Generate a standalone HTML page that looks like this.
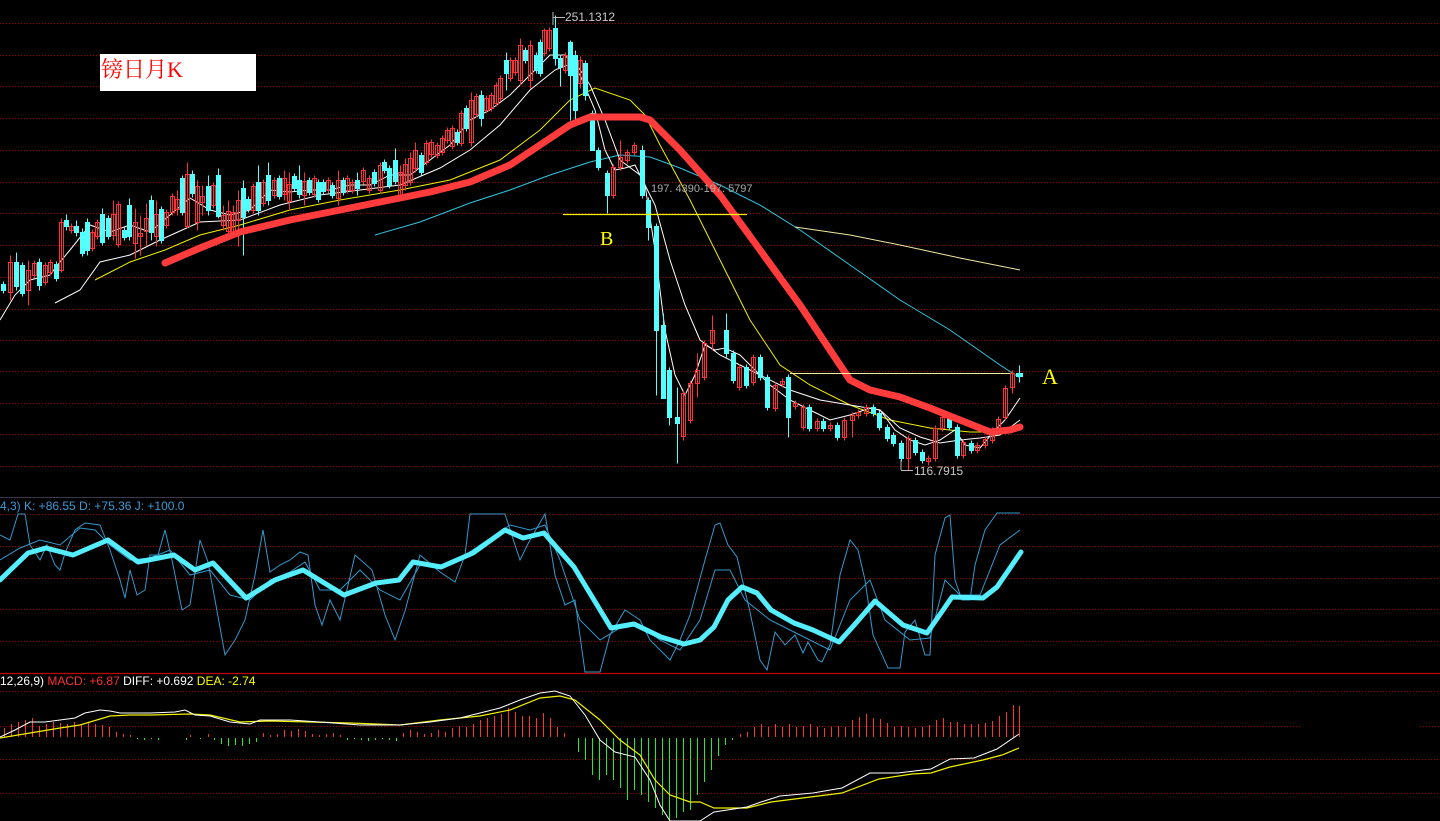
<!DOCTYPE html>
<html><head><meta charset="utf-8"><style>
html,body{margin:0;padding:0;background:#000;width:1440px;height:821px;overflow:hidden}
svg{display:block}
text{font-family:"Liberation Sans",sans-serif}
</style></head><body>
<svg width="1440" height="821" viewBox="0 0 1440 821" xmlns="http://www.w3.org/2000/svg">
<rect width="1440" height="821" fill="#000"/>
<g stroke="#a00000" stroke-width="1" stroke-dasharray="1,2" fill="none">
<path d="M0 23.5H1440M0 55.5H1440M0 86.5H1440M0 118.5H1440M0 150.5H1440M0 182.5H1440M0 213.5H1440M0 245.5H1440M0 277.5H1440M0 309.5H1440M0 340.5H1440M0 371.5H1440M0 403.5H1440M0 434.5H1440M0 466.5H1440"/>
<path d="M0 514.5H1440M0 546.5H1440M0 578.5H1440M0 609.5H1440M0 641.5H1440"/>
<path d="M0 691.5H1440M0 726.5H1300M1420 726.5H1440M0 759.5H1440M0 793.5H1440"/>
</g>
<path d="M0 497.5H1440" stroke="#3a3a4a" stroke-width="1"/>
<path d="M0 673.5H1440" stroke="#c00000" stroke-width="1.3"/>

<rect x="100" y="54" width="156" height="37" fill="#fff"/>
<text x="101" y="77" font-size="22" fill="#ff0000" style="font-family:'Liberation Serif','Noto Serif CJK SC',serif">镑日月K</text>

<polyline fill="none" stroke="#2fc6e0" stroke-width="1" points="375,235 420,222 470,203 510,190 550,175 590,162 620,155 650,157 680,168 720,185 760,205 800,230 850,265 900,300 950,330 1000,365 1020,378"/>
<polyline fill="none" stroke="#f0e8a0" stroke-width="1" points="795,227 850,235 900,245 960,258 1020,270"/>
<polyline fill="none" stroke="#f0f000" stroke-width="1" points="95,280 130,262 165,250 200,235 240,225 290,210 340,200 400,190 450,180 500,160 540,130 570,100 595,88 630,100 645,115 660,145 690,200 720,260 750,320 780,365 810,385 850,405 890,420 930,428 970,432 1000,432 1020,428"/>
<polyline fill="none" stroke="#ffffff" stroke-width="1" points="55,303 80,290 100,262 130,255 160,240 200,222 240,220 280,205 320,195 360,190 400,185 440,168 470,150 500,125 530,90 555,70 575,62 590,85 605,120 620,160 640,175 655,205 670,260 685,305 700,340 720,355 740,365 760,375 790,390 820,400 850,405 880,410 900,428 920,437 940,443 960,440 980,438 1000,435 1020,420"/>
<polyline fill="none" stroke="#ffffff" stroke-width="1" points="0,320 15,295 30,280 50,275 60,262 70,250 90,225 110,232 130,225 150,232 170,215 190,198 210,210 230,215 250,210 270,190 290,192 310,190 330,190 350,185 370,185 390,175 410,175 430,160 450,145 470,120 490,110 510,95 530,75 550,55 565,55 580,75 595,110 605,150 615,170 625,168 635,165 645,185 655,250 665,330 675,375 685,395 695,375 705,345 715,350 725,348 740,355 755,370 770,385 790,400 810,410 830,420 850,415 870,408 880,410 895,430 910,440 925,445 940,440 955,430 965,445 980,448 995,430 1005,420 1020,398"/>

<g transform="translate(0.5,0.5)" shape-rendering="crispEdges">
<path fill="none" stroke="#ff3232" stroke-width="1" d="
M10 255V300M8 262h4v30h-4z M28 260V305M26 270h4v20h-4z M34 260V278M32 263h4v12h-4z M45 262V285M43 265h4v17h-4z M50 259V275M48 262h4v10h-4z M61 218V272M59 222h4v48h-4z M71 223V233M69 226h4v4h-4z M92 229V251M90 232h4v16h-4z M97 219V239M95 222h4v14h-4z M113 200V240M111 214h4v21h-4z M118 201V247M116 204h4v40h-4z M135 208V258M133 222h4v21h-4z M140 215V255M138 233h4v3h-4z M146 203V245M144 218h4v13h-4z M156 200V246M154 214h4v22h-4z M166 209V228M164 212h4v13h-4z M172 193V215M170 196h4v16h-4z M177 190V215M175 199h4v10h-4z M187 162V228M185 174h4v52h-4z M197 180V230M195 186h4v36h-4z M202 185V215M200 196h4v6h-4z M213 182V208M211 185h4v20h-4z M223 205V230M221 215h4v10h-4z M228 200V236M226 211h4v20h-4z M233 205V237M231 212h4v21h-4z M238 190V246M236 200h4v20h-4z M253 183V213M251 186h4v24h-4z M263 179V206M261 182h4v21h-4z M274 177V198M272 180h4v15h-4z M284 170V200M282 178h4v16h-4z M289 172V210M287 184h4v17h-4z M304 172V205M302 181h4v14h-4z M314 175V197M312 178h4v16h-4z M328 177V193M326 180h4v10h-4z M338 170V205M336 180h4v18h-4z M347 175V193M345 178h4v12h-4z M352 179V193M350 182h4v8h-4z M363 167V184M361 170h4v11h-4z M369 175V193M367 178h4v12h-4z M380 162V193M378 165h4v25h-4z M400 165V200M398 172h4v24h-4z M405 158V190M403 164h4v21h-4z M410 152V185M408 158h4v24h-4z M415 142V172M413 150h4v18h-4z M426 140V165M424 143h4v19h-4z M431 139V157M429 142h4v12h-4z M437 142V158M435 145h4v10h-4z M442 135V155M440 138h4v14h-4z M447 127V143M445 130h4v10h-4z M452 125V149M450 128h4v18h-4z M461 110V146M459 113h4v30h-4z M471 92V146M469 100h4v42h-4z M476 93V117M474 96h4v18h-4z M486 95V113M484 98h4v12h-4z M491 92V111M489 95h4v13h-4z M496 82V106M494 85h4v18h-4z M500 75V101M498 78h4v20h-4z M510 57V81M508 60h4v18h-4z M515 57V75M513 60h4v12h-4z M520 38V85M518 45h4v35h-4z M530 40V88M528 45h4v35h-4z M544 28V56M542 30h4v23h-4z M549 27V51M547 30h4v18h-4z M565 52V73M563 55h4v15h-4z M580 56V88M578 60h4v23h-4z
M613 164V198M611 167h4v28h-4z M620 140V170M618 157h4v10h-4z M627 149V163M625 152h4v8h-4z M634 142V155M632 145h4v7h-4z M683 390V440M681 393h4v43h-4z M690 380V423M688 383h4v37h-4z M697 353V397M695 370h4v13h-4z M704 340V380M702 343h4v34h-4z M712 315V350M710 330h4v13h-4z M739 364V390M737 367h4v20h-4z M753 354V385M751 357h4v25h-4z M775 382V411M773 385h4v23h-4z M782 378V387M780 381h4v3h-4z M795 400V409M793 403h4v3h-4z M803 404V430M801 407h4v20h-4z M817 418V431M815 421h4v7h-4z M830 422V431M828 425h4v3h-4z M844 417V440M842 420h4v17h-4z M852 412V437M850 415h4v5h-4z M858 409V418M856 412h4v3h-4z M866 404V416M864 407h4v6h-4z M908 435V470M906 438h4v20h-4z M928 455V465M926 458h4v3h-4z M935 425V461M933 428h4v30h-4z M942 414V431M940 417h4v11h-4z M963 439V458M961 442h4v13h-4z M977 442V453M975 445h4v5h-4z M985 436V448M983 439h4v6h-4z M992 427V443M990 430h4v10h-4z M998 416V433M996 419h4v11h-4z M1005 385V420M1003 388h4v29h-4z M1012 370V393M1010 373h4v14h-4z"/>
<path fill="#54ffff" stroke="#54ffff" stroke-width="1" d="
M3 281V293M1 284h4v6h-4z M16 252V290M14 262h4v24h-4z M22 262V296M20 265h4v28h-4z M39 258V290M37 262h4v23h-4z M56 261V281M54 264h4v14h-4z M66 214V230M64 220h4v6h-4z M76 220V236M74 226h4v6h-4z M82 228V256M80 232h4v21h-4z M87 218V255M85 222h4v28h-4z M102 208V245M100 214h4v28h-4z M108 215V239M106 218h4v18h-4z M124 227V240M122 230h4v7h-4z M129 198V240M127 205h4v31h-4z M151 195V240M149 200h4v32h-4z M161 206V243M159 209h4v31h-4z M182 175V215M180 178h4v34h-4z M192 170V197M190 174h4v19h-4z M208 175V215M206 186h4v24h-4z M218 168V218M216 175h4v41h-4z M243 180V255M241 188h4v29h-4z M248 196V212M246 199h4v10h-4z M258 165V215M256 182h4v28h-4z M268 162V205M266 175h4v25h-4z M279 175V199M277 178h4v18h-4z M294 173V191M292 176h4v12h-4z M299 165V198M297 180h4v14h-4z M309 177V195M307 180h4v12h-4z M318 179V202M316 182h4v17h-4z M323 179V194M321 182h4v9h-4z M332 182V198M330 185h4v10h-4z M343 177V195M341 180h4v12h-4z M357 172V195M355 180h4v8h-4z M374 169V186M372 172h4v11h-4z M384 159V173M382 162h4v8h-4z M389 165V188M387 168h4v17h-4z M395 148V184M393 160h4v21h-4z M421 152V175M419 155h4v17h-4z M457 129V145M455 132h4v10h-4z M466 105V131M464 108h4v20h-4z M481 90V126M479 95h4v23h-4z M506 52V90M504 60h4v13h-4z M525 47V63M523 50h4v10h-4z M536 52V73M534 55h4v15h-4z M540 39V76M538 42h4v31h-4z M555 15V65M553 28h4v30h-4z M560 54V86M558 58h4v9h-4z M570 40V120M568 42h4v33h-4z M575 50V120M573 55h4v55h-4z M585 60V100M583 63h4v32h-4z M592 110V150M590 113h4v37h-4z
M598 147V170M596 150h4v17h-4z M607 170V213M605 173h4v22h-4z M642 145V198M640 150h4v45h-4z M648 197V240M646 200h4v27h-4z M656 223V395M654 226h4v104h-4z M663 313V398M661 325h4v73h-4z M669 367V425M667 370h4v47h-4z M677 387V463M675 417h4v6h-4z M726 313V357M724 330h4v23h-4z M733 350V383M731 353h4v27h-4z M746 364V388M744 367h4v18h-4z M760 354V380M758 357h4v20h-4z M767 374V410M765 377h4v30h-4z M788 374V437M786 377h4v40h-4z M809 404V431M807 407h4v21h-4z M823 418V431M821 421h4v7h-4z M837 422V440M835 425h4v12h-4z M873 404V416M871 407h4v6h-4z M879 410V430M877 413h4v14h-4z M887 424V441M885 427h4v11h-4z M893 432V446M891 435h4v8h-4z M901 440V461M899 443h4v15h-4z M915 437V455M913 440h4v12h-4z M922 449V463M920 452h4v8h-4z M949 414V430M947 417h4v10h-4z M957 424V458M955 427h4v28h-4z M971 440V453M969 443h4v7h-4z M1019 365V382M1016 373h6v3h-6z"/>
</g>

<polyline fill="none" stroke="#ff3b3b" stroke-width="7" stroke-linecap="round" stroke-linejoin="round" points="165,263 200,248 240,232 290,220 340,210 390,200 430,192 470,182 510,165 540,145 570,125 590,117 640,117 650,120 680,150 720,195 760,250 800,305 830,350 850,380 870,390 900,397 930,408 960,420 990,432 1010,430 1020,427"/>

<path d="M563 214.5H747" stroke="#f0f000" stroke-width="1.3"/>
<text x="600" y="245" font-size="20" fill="#ffff00" style="font-family:'Liberation Serif',serif">B</text>
<path d="M790 373.5H1010" stroke="#f0f0a0" stroke-width="1"/>
<text x="1042" y="384" font-size="22" fill="#ffff00" style="font-family:'Liberation Serif',serif">A</text>
<text x="651" y="192" font-size="11" fill="#aaaaaa">197. 4390-197. 5797</text>
<path d="M553 12V25M553 17.5H565" stroke="#bbbbbb" stroke-width="1"/>
<text x="565" y="21" font-size="12" fill="#c8c8c8">251.1312</text>
<path d="M901 460V470M901 470.5H913" stroke="#bbbbbb" stroke-width="1"/>
<text x="914" y="475" font-size="12" fill="#c8c8c8">116.7915</text>

<text x="0" y="510" font-size="12" fill="#3b9ad6">4,3) K: +86.55 D: +75.36 J: +100.0</text>
<polyline fill="none" stroke="#3399cc" stroke-width="1" points="0,535 10,540 18,514 25,514 30,545 40,560 47,545 55,565 60,570 65,553 75,530 85,523 100,525 110,550 120,580 125,598 130,570 137,595 145,590 150,555 158,555 165,530 172,560 182,610 190,605 200,540 208,562 215,600 225,655 235,640 245,620 255,575 263,530 270,572 280,565 290,560 300,552 308,555 315,605 322,625 330,600 340,620 355,555 372,570 385,615 395,640 405,611 420,555 440,572 455,582 465,555 470,514 505,514 515,545 520,560 530,540 545,514 555,575 565,605 575,600 585,672 600,672 610,635 625,610 640,620 650,640 660,650 670,660 680,640 690,615 705,560 715,525 720,523 728,545 737,557 750,612 760,660 767,670 775,632 785,645 795,635 803,653 808,642 818,660 822,662 830,645 840,575 850,540 858,550 865,580 873,635 888,668 900,668 905,632 915,620 925,655 930,655 935,555 945,518 950,515 955,580 962,600 970,600 975,565 985,530 997,513 1020,513"/>
<polyline fill="none" stroke="#3399cc" stroke-width="1" points="0,560 20,548 40,540 60,545 80,528 95,530 110,545 130,560 150,558 170,550 190,575 210,570 230,595 250,600 270,580 290,572 305,562 320,590 340,590 360,570 380,590 400,600 420,565 450,565 480,545 510,525 530,530 545,525 560,560 580,620 600,640 620,628 640,625 660,640 680,650 700,620 715,570 730,570 745,600 770,620 800,635 830,650 850,600 870,580 885,620 910,640 930,638 945,580 960,595 980,595 1000,545 1020,530"/>
<polyline fill="none" stroke="#55eeff" stroke-width="5" stroke-linecap="round" stroke-linejoin="round" points="0,580 28,553 46,548 73,555 108,540 138,562 174,555 195,570 213,563 246,598 275,580 303,570 344,595 376,583 399,580 413,562 441,567 473,553 505,530 523,538 544,533 574,567 611,628 634,624 661,637 684,644 700,640 714,627 728,600 742,587 757,593 771,610 794,623 813,630 839,642 856,623 875,601 889,613 903,625 927,633 941,613 952,597 983,598 997,587 1021,552"/>

<text x="0" y="685" font-size="12"><tspan fill="#ffffff">12,26,9)</tspan><tspan fill="#ff3232"> MACD: +6.87</tspan><tspan fill="#ffffff"> DIFF: +0.692</tspan><tspan fill="#ffff00"> DEA: -2.74</tspan></text>
<g transform="translate(0.5,0)" shape-rendering="crispEdges">
<path stroke="#ff3232" stroke-width="1" d="M4 737V728M11 737V724M18 737V722M25 737V720M32 737V718M39 737V726M46 737V724M53 737V722M60 737V723M67 737V724M74 737V722M81 737V724M88 737V722M95 737V724M102 737V725M109 737V727M116 737V732M123 737V734M130 737V735M190 737V735M208 737V734M263 737V733M270 737V735M277 737V734M284 737V730M291 737V731M298 737V729M305 737V731M312 737V734M319 737V735M326 737V734M333 737V733M340 737V735M403 737V733M410 737V730M417 737V732M424 737V734M431 737V733M438 737V730M445 737V732M452 737V728M459 737V726M466 737V727M473 737V724M480 737V720M487 737V718M494 737V716M501 737V714M508 737V708M515 737V712M522 737V716M529 737V716M536 737V718M543 737V713M550 737V718M557 737V727M564 737V733
M740 737V734M747 737V732M754 737V727M761 737V724M768 737V727M775 737V724M782 737V727M789 737V724M796 737V727M803 737V726M810 737V724M817 737V727M824 737V728M831 737V727M838 737V726M845 737V727M852 737V720M859 737V717M866 737V714M873 737V718M880 737V719M887 737V723M894 737V727M901 737V726M908 737V727M915 737V728M922 737V727M929 737V725M936 737V720M943 737V718M950 737V722M957 737V722M964 737V724M971 737V724M978 737V724M985 737V723M992 737V721M999 737V716M1006 737V712M1013 737V705M1019 737V706"/>
<path stroke="#22ee22" stroke-width="1" d="M137 738V739M144 738V740M151 738V739M158 738V740M186 738V740M200 738V739M214 738V740M221 738V744M228 738V746M235 738V745M242 738V746M249 738V744M256 738V742M347 738V740M354 738V739M361 738V740M368 738V741M375 738V740M382 738V739M389 738V740M396 738V741M578 738V752M585 738V760M592 738V775M599 738V780M606 738V775M613 738V780M620 738V788M627 738V800M634 738V790M641 738V795M648 738V802M655 738V808M662 738V815M669 738V820M676 738V818M683 738V812M690 738V810M697 738V795M704 738V782M711 738V770M718 738V756M725 738V745M732 738V740"/>
</g>
<polyline fill="none" stroke="#f0f000" stroke-width="1.2" points="0,738 30,733 60,728 80,725 110,716 130,715 150,715 190,714 210,715 240,722 270,721 310,722 350,723 400,725 440,720 480,716 510,710 540,698 560,696 575,700 600,720 620,740 640,755 655,780 670,795 690,802 700,802 714,808 747,808 771,802 842,793 879,779 912,774 931,773 950,767 983,760 1002,755 1019,748"/>
<polyline fill="none" stroke="#ffffff" stroke-width="1" points="0,737 15,730 30,722 45,722 60,720 75,718 85,713 100,710 110,711 120,713 150,713 175,712 185,710 195,715 210,716 230,722 250,724 260,720 290,720 320,722 360,725 400,725 430,722 460,718 480,713 500,708 520,700 540,693 555,691 570,696 585,715 600,740 615,752 635,757 650,780 660,805 670,821 700,821 714,812 747,807 761,802 780,796 813,793 842,788 870,773 898,773 931,769 950,759 974,758 997,749 1019,734"/>
</svg>
</body></html>
